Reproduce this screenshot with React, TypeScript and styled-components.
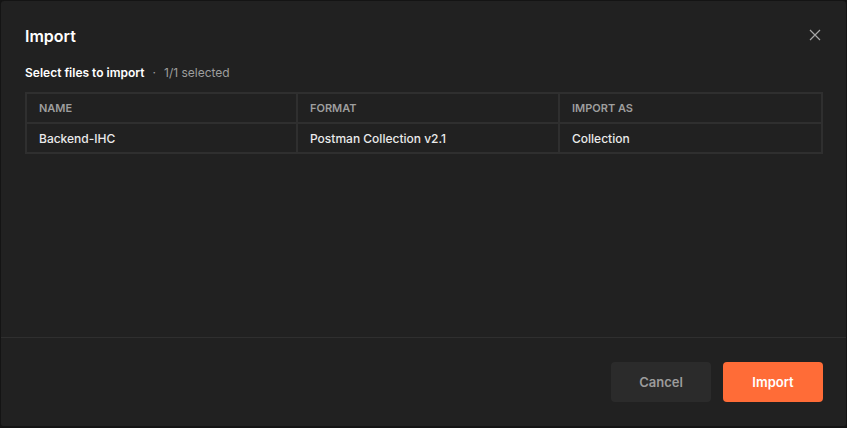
import React from 'react';
import styled, { createGlobalStyle } from 'styled-components';

const Global = createGlobalStyle`
  html, body {
    margin: 0;
    padding: 0;
    background: #141414;
  }
  * {
    box-sizing: border-box;
  }
`;

const Dialog = styled.div`
  width: 847px;
  height: 428px;
  background: #212121;
  border: 1px solid #141414;
  border-bottom-width: 2px;
  border-radius: 4px;
  display: flex;
  flex-direction: column;
  font-family: Inter, "Noto Sans", sans-serif;
  color: #f0f0f0;
`;

const Header = styled.div`
  display: flex;
  align-items: center;
  justify-content: space-between;
  padding: 22px 24px 0 24px;
  height: 48px;
`;

const Title = styled.h1`
  margin: 0;
  font-size: 16px;
  line-height: 24px;
  font-weight: 600;
  color: #ffffff;
`;

const Close = styled.button`
  width: 20px;
  height: 20px;
  margin-top: -3px;
  margin-right: -3px;
  padding: 0;
  border: none;
  background: none;
  display: flex;
  align-items: center;
  justify-content: center;
  color: #a6a6a6;
`;

const Body = styled.div`
  flex: 1;
  padding: 16px 24px 0 24px;
`;

const Subtitle = styled.div`
  font-size: 12px;
  line-height: 16px;
  margin-bottom: 11px;
  display: flex;
  align-items: center;
  gap: 8px;
`;

const Strong = styled.span`
  font-weight: 600;
  color: #ffffff;
`;

const Muted = styled.span`
  color: #9e9e9e;
`;

const Table = styled.div`
  display: grid;
  grid-template-columns: 269px 260px 261px;
  gap: 2px;
  padding: 2px;
  width: 798px;
  background: #2f2f2f;
`;

const Cell = styled.div<{ $head?: boolean }>`
  background: #212121;
  height: 28px;
  display: flex;
  align-items: center;
  padding-left: 12px;
  font-size: ${(p) => (p.$head ? '11px' : '12px')};
  font-weight: ${(p) => (p.$head ? 600 : 500)};
  color: ${(p) => (p.$head ? '#9e9e9e' : '#eaeaea')};
  text-transform: ${(p) => (p.$head ? 'uppercase' : 'none')};
`;

const Footer = styled.div`
  border-top: 1px solid #2f2f2f;
  padding: 24px 23px 24px 24px;
  display: flex;
  justify-content: flex-end;
  gap: 12px;
`;

const Button = styled.button<{ $primary?: boolean }>`
  width: 100px;
  height: 40px;
  border: none;
  border-radius: 4px;
  font-family: Inter, "Noto Sans", sans-serif;
  font-size: 13px;
  font-weight: 600;
  background: ${(p) => (p.$primary ? '#ff6c37' : '#2b2b2b')};
  color: ${(p) => (p.$primary ? '#ffffff' : '#9c9c9c')};
`;

const columns = ['Name', 'Format', 'Import as'];
const rows = [['Backend-IHC', 'Postman Collection v2.1', 'Collection']];

export default function App() {
  return (
    <>
      <Global />
      <Dialog>
        <Header>
          <Title>Import</Title>
          <Close>
            <svg width="12" height="12" viewBox="0 0 12 12">
              <path d="M1 1L11 11M11 1L1 11" stroke="currentColor" strokeWidth="1.2" />
            </svg>
          </Close>
        </Header>
        <Body>
          <Subtitle>
            <Strong>Select files to import</Strong>
            <Muted>·</Muted>
            <Muted>1/1 selected</Muted>
          </Subtitle>
          <Table>
            {columns.map((c) => (
              <Cell $head key={c}>{c}</Cell>
            ))}
            {rows.map((r) => r.map((v, i) => <Cell key={i}>{v}</Cell>))}
          </Table>
        </Body>
        <Footer>
          <Button>Cancel</Button>
          <Button $primary>Import</Button>
        </Footer>
      </Dialog>
    </>
  );
}
